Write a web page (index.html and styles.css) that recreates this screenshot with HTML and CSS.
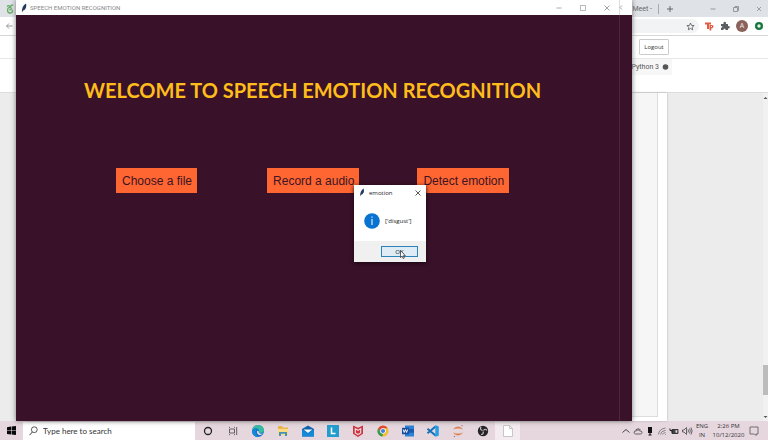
FILE: index.html
```
<!DOCTYPE html>
<html lang="en">
<head>
<meta charset="utf-8">
<title>Speech Emotion Recognition</title>
<link rel="stylesheet" href="styles.css">
</head>
<body>
<main class="desktop">
  <section class="browser">
    <div class="tabs">
      <svg class="tab-icon" width="8" height="10" viewBox="0 0 8 10"><path d="M1 2.500Q3 .5 4 3Q5 1 7 1M6 4.500Q2 2 1.500 6Q1.500 9 4 9Q6.500 9 6.500 7Q6 5 3 6" fill="none" stroke="#62ad62" stroke-width="1.300"/></svg>
      <span class="grow"></span>
      <span class="tab-title">Meet -</span>
      <button class="new-tab" aria-label="New tab"><svg width="8" height="8" viewBox="0 0 8 8"><path d="M4 1v6M1 4h6" stroke="#666"/></svg></button>
      <div class="chrome-controls">
        <button aria-label="Minimize"><svg width="8" height="8" viewBox="0 0 8 8"><path d="M1.500 4h5" stroke="#999"/></svg></button>
        <button aria-label="Restore"><svg width="8" height="8" viewBox="0 0 8 8"><path d="M1.500 2.500h4v4h-4zM3 2.500v-1h3.500v4h-1" fill="none" stroke="#888" stroke-width=".8"/></svg></button>
        <button aria-label="Close"><svg width="8" height="8" viewBox="0 0 8 8"><path d="M2 2l4 4M6 2l-4 4" stroke="#999" stroke-width=".9"/></svg></button>
      </div>
    </div>
    <div class="toolbar">
      <button aria-label="Back"><svg width="8" height="8" viewBox="0 0 8 8"><path d="M7.500 4H1.500M4 1.500L1.500 4L4 6.500" fill="none" stroke="#999"/></svg></button>
      <div class="address"><svg width="9" height="9" viewBox="0 0 9 9"><path d="M4.500 1l1 2.400 2.600.2-2 1.700.6 2.500-2.200-1.300-2.200 1.300.6-2.500-2-1.700 2.600-.2z" fill="none" stroke="#555" stroke-width=".8"/></svg></div>
      <div class="extensions">
        <svg width="10" height="10" viewBox="0 0 10 10"><path d="M1 1.500h6v2H5V8H3V3.500H1zM5.500 9.500V4h2.500q1.700.2 1.500 1.700Q9 7.300 7.300 7.300V9.500z" fill="#e35a43"/><path d="M7 5.500h1" stroke="#fff"/></svg>
        <svg width="10" height="10" viewBox="0 0 10 10"><path d="M1 3h2.500Q3 .8 4.700.8T6 3h2v2q1.800-.2 1.800 1.200T8 7.400V9H5.700Q5.500 7.500 4.500 7.500T3.300 9H1V6.800q1.400 0 1.400-1T1 4.900z" fill="#5b5f64"/></svg>
        <span class="avatar">A</span>
        <svg width="10" height="10" viewBox="0 0 10 10"><circle cx="5" cy="5" r="4" fill="#17763d"/><circle cx="5" cy="5" r="1.700" fill="#e9f3ed"/></svg>
      </div>
    </div>
    <div class="page-header"><button class="logout">Logout</button></div>
    <div class="kernel"><span>Python 3</span><svg width="13" height="16" viewBox="0 0 13 16"><circle cx="6.500" cy="8" r="2.800" fill="#555"/></svg></div>
    <div class="notebook">
      <div class="sheet"><div class="cells"></div></div>
      <div class="scroll"><svg width="5" height="4" viewBox="0 0 5 4"><path d="M.5 3l2-2 2 2z" fill="#555"/></svg><i></i><svg width="5" height="4" viewBox="0 0 5 4"><path d="M.5 1l2 2 2-2z" fill="#555"/></svg></div>
    </div>
  </section>

  <section class="app">
    <header class="titlebar">
      <svg width="6" height="10" viewBox="0 0 6 10"><path d="M5 .5Q6 4 3.500 7L2 7.500 1 9.500Q.5 3 5 .5z" fill="#24395e"/></svg>
      <span class="grow">SPEECH EMOTION RECOGNITION</span>
      <div class="controls">
        <button aria-label="Minimize"><svg width="8" height="8" viewBox="0 0 8 8"><path d="M1.500 4h5" stroke="#aaa"/></svg></button>
        <button aria-label="Maximize"><svg width="8" height="8" viewBox="0 0 8 8"><path d="M1.500 1.500h5v5h-5z" fill="none" stroke="#999" stroke-width=".7"/></svg></button>
        <button aria-label="Close"><svg width="8" height="8" viewBox="0 0 8 8"><path d="M1.500 1.500l5 5M6.500 1.500l-5 5" stroke="#999" stroke-width=".9"/></svg></button>
      </div>
      <svg width="13" height="15" viewBox="0 0 13 15"><path d="M.5 0v15" stroke="#ddd"/><path d="M3 5.500L1 7.500l2 2" fill="none" stroke="#999" stroke-width=".9"/></svg>
    </header>
    <div class="app-body">
      <div class="content">
        <h1>WELCOME TO SPEECH EMOTION RECOGNITION</h1>
        <div class="actions">
          <button>Choose a file</button>
          <button>Record a audio</button>
          <button>Detect emotion</button>
        </div>
      </div>
      <div class="edge"></div>
    </div>
  </section>

  <section class="dialog" role="dialog" aria-labelledby="dialog-title">
    <header>
      <svg width="6" height="9" viewBox="0 0 6 10"><path d="M5 .5Q6 4 3.500 7L2 7.500 1 9.500Q.5 3 5 .5z" fill="#24395e"/></svg>
      <span id="dialog-title" class="grow">emotion</span>
      <button aria-label="Close"><svg width="8" height="8" viewBox="0 0 8 8"><path d="M1.500 1.500l5 5M6.500 1.500l-5 5" stroke="#333" stroke-width=".8"/></svg></button>
    </header>
    <div class="message">
      <svg width="16" height="16" viewBox="0 0 16 16"><circle cx="8" cy="8" r="7.800" fill="#0873d1"/><path d="M8 3.500v1.300M8 6v6" stroke="#c5e2fa" stroke-width="1.300"/></svg>
      <span>['disgust']</span>
    </div>
    <footer><button class="ok">OK</button></footer>
    <svg class="cursor" width="6" height="9" viewBox="0 0 6 9"><path d="M.5.500v7l1.600-1.400 1 2.400 1.200-.5-1-2.300h2z" fill="#fff" stroke="#222" stroke-width=".7"/></svg>
  </section>
</main>

<footer class="taskbar">
  <button class="start" aria-label="Start"><svg width="9" height="9" viewBox="0 0 9 9"><path d="M0 1.200L4 .6v3.600H0zM4.600.500L9 0v4.200H4.600zM0 4.800h4v3.600L0 7.900zM4.600 4.800H9V9l-4.400-.6z" fill="#080808"/></svg></button>
  <label class="search">
    <svg width="9" height="10" viewBox="0 0 9 10"><circle cx="5.300" cy="3.700" r="2.900" fill="none" stroke="#444" stroke-width=".9"/><path d="M3.300 6L.6 9.200" stroke="#444"/></svg>
    <input type="text" placeholder="Type here to search" aria-label="Search">
  </label>
  <nav class="apps">
    <button aria-label="Cortana"><svg width="14" height="14" viewBox="0 0 14 14"><circle cx="7" cy="7" r="3.500" fill="none" stroke="#222" stroke-width="1.300"/></svg></button>
    <button aria-label="Task view"><svg width="14" height="14" viewBox="0 0 14 14"><path d="M3.500 5h5v4h-5zM3.500 2.800v1M8.500 2.800v1M3.500 10.200v1M8.500 10.200v1M10.700 3v8" fill="none" stroke="#555" stroke-width=".9"/></svg></button>
    <button aria-label="Edge"><svg width="14" height="14" viewBox="0 0 14 14"><circle cx="7" cy="7" r="6" fill="#1473c8"/><path d="M1 7Q1.500 1 7 1q6 .3 6 5.500Q12.500 9 9 9q-1.500 0-1.300-1.200Q9 5 5.500 4.300 2 4 1 7z" fill="#37bca0"/><path d="M1 7q1.500-3.500 5-2.200Q3.500 7.300 5.500 10.500L7 13Q1 12.500 1 7z" fill="#1687db"/><path d="M7.600 7.300Q7 9 9.500 9.800q1.800.2 2.800-.6-2 2.500-4.700 1.500Q5 9 6.500 6.500z" fill="#e6d9e6"/></svg></button>
    <button aria-label="Files"><svg width="14" height="14" viewBox="0 0 14 14"><path d="M2 2h4l1 1.500h5V11H2z" fill="#e8b64b"/><path d="M2 5h10v6H2z" fill="#f9dc83"/><path d="M3 12V8h8v4H9V9.700H5V12z" fill="#4592bb"/></svg></button>
    <button aria-label="Mail"><svg width="14" height="14" viewBox="0 0 14 14"><path d="M1 5l6-3.500L13 5v7.500H1z" fill="#0e65ae"/><path d="M2.500 5.500h9L7 9z" fill="#eef7fb"/><path d="M1 5.500L7 9.500l6-4v7H1z" fill="#1688d8"/></svg></button>
    <button aria-label="Lenovo"><svg width="14" height="14" viewBox="0 0 14 14"><path d="M1 1h12v12H1z" fill="#229dce"/><path d="M5.500 3.500v6h4" fill="none" stroke="#fff" stroke-width="1.500"/></svg></button>
    <button aria-label="McAfee"><svg width="14" height="14" viewBox="0 0 14 14"><path d="M2 1.500l5 2.300 5-2.300v8.300L7 13l-5-3.200z" fill="#cc3540"/><path d="M4.300 9V4.800L7 6.200l2.700-1.400V9L7 10.500z" fill="none" stroke="#eed6dc" stroke-width="1.200"/></svg></button>
    <button aria-label="Chrome"><svg width="14" height="14" viewBox="0 0 14 14"><circle cx="7" cy="7" r="5.500" fill="#f3bd2b"/><path d="M2.200 4.200A5.500 5.500 0 0 1 11.800 4.200H7L4.600 8.400z" fill="#dc4a3d"/><path d="M2.200 4.200L4.600 8.400 7 9.800l-.6 2.700A5.500 5.500 0 0 1 2.200 4.200z" fill="#319c56"/><circle cx="7" cy="7" r="2.800" fill="#fff"/><circle cx="7" cy="7" r="2.100" fill="#4182de"/></svg></button>
    <button aria-label="Word"><svg width="14" height="14" viewBox="0 0 14 14"><path d="M4 1.500h9v11H4z" fill="#2c82d4"/><path d="M4 5h9v3.700H4z" fill="#1c5aaf"/><path d="M1 3.800h7v6.500H1z" fill="#164d9e"/><path d="M2.200 5.500l1 3 1.200-3 1.200 3 1-3" fill="none" stroke="#fff" stroke-width=".9"/></svg></button>
    <button aria-label="Visual Studio Code"><svg width="14" height="14" viewBox="0 0 14 14"><path d="M1.500 4.800L9.500 11.500M1.500 9.200L9.500 2.500" stroke="#1272b8" stroke-width="2"/><path d="M9.300 1l3.500 1.500v9L9.300 13z" fill="#279ce4"/></svg></button>
    <button aria-label="Jupyter"><svg width="14" height="14" viewBox="0 0 14 14"><path d="M2.500 5Q7 .5 11.500 5 7 3.300 2.500 5zM2.500 9Q7 13.500 11.500 9 7 10.700 2.500 9z" fill="#dc8052" stroke="#dc8052" stroke-width=".4"/><circle cx="11" cy="1.800" r=".7" fill="#a77"/><circle cx="3.500" cy="12.500" r=".7" fill="#a77"/></svg></button>
    <button aria-label="OBS"><svg width="14" height="14" viewBox="0 0 14 14"><circle cx="7" cy="7" r="5.200" fill="#252427"/><path d="M6.500 6.500Q3.500 5.500 5 3M7.500 6.500Q9.500 4 11 6.500M7 7.500Q8 10.500 5 10.500" fill="none" stroke="#cfc5cb" stroke-width="1.200"/></svg></button>
    <button class="active" aria-label="Document"><svg width="14" height="14" viewBox="0 0 14 14"><path d="M2.500 1.500h6L11.500 4.500v8h-9z" fill="#fff" stroke="#bbb" stroke-width=".8"/><path d="M8.500 1.500v3h3" fill="none" stroke="#bbb" stroke-width=".8"/></svg></button>
  </nav>
  <span class="grow"></span>
  <div class="tray">
    <svg width="10" height="10" viewBox="0 0 10 10"><path d="M1.500 6.500L5 3.500l3.500 3" fill="none" stroke="#444"/></svg>
    <svg width="10" height="10" viewBox="0 0 10 10"><path d="M2.500 8Q.8 7.500 1 6q.5-1.300 2-1Q5 2.500 7 5q2-.2 2 1.500Q9 8 7.500 8zM2.500 4Q5 1.500 7.500 3.700" fill="none" stroke="#555" stroke-width=".9"/></svg>
    <svg width="10" height="10" viewBox="0 0 10 10"><path d="M3 1h4v6H3z" fill="#111"/><path d="M5 7v2M3.500 9h3" fill="none" stroke="#111"/></svg>
    <svg width="10" height="10" viewBox="0 0 10 10"><path d="M1.500 8.500Q2 3 8.500 2M3.500 8.500Q4 5 8.500 4.300M5.500 8.500Q6 7 8.500 6.500M8 8.500h.8" fill="none" stroke="#777" stroke-width=".9"/></svg>
    <svg width="10" height="10" viewBox="0 0 10 10"><path d="M3 3.500h6v4H3z" fill="#444" stroke="#222" stroke-width=".8"/><path d="M1 2.500v2h2v2" fill="none" stroke="#222"/><path d="M6.500 4.200h1.800v2.500H6.500z" fill="#ddd"/></svg>
    <svg width="12" height="10" viewBox="0 0 12 10"><path d="M1.500 4H3l2.500-2.500v7L3 6H1.500zM7 3.500q1 1.500 0 3M8.500 2.500q1.700 2.500 0 5M10 1.500q2.200 3.500 0 7" fill="none" stroke="#444" stroke-width=".8"/></svg>
  </div>
  <div class="stack lang"><span>ENG</span><span>IN</span></div>
  <div class="stack clock"><span>2:26 PM</span><span>10/12/2020</span></div>
  <button class="notices" aria-label="Notifications"><svg width="10" height="10" viewBox="0 0 10 10"><path d="M1 1h8v7H7v1.500L5.500 8H1z" fill="none" stroke="#555" stroke-width=".8"/></svg></button>
</footer>
</body>
</html>
```
FILE: styles.css
```
* { box-sizing: border-box; }
body {
  margin: 0;
  height: 100vh;
  display: flex;
  flex-direction: column;
  overflow: hidden;
  font-family: "Open Sans", sans-serif;
  font-size: 7px;
  color: #333;
}
button {
  border: 0;
  padding: 0;
  background: none;
  font: inherit;
  color: inherit;
  display: flex;
  align-items: center;
  justify-content: center;
}
svg { display: block; flex: none; }
.grow { flex: 1; }
.desktop { flex: 1; position: relative; min-height: 0; }

.browser { height: 100%; display: flex; flex-direction: column; background: #fff; }
.tabs { height: 17px; display: flex; align-items: center; background: #dfe2e7; padding: 0 5px 0 6px; flex: none; }
.tab-title { padding-right: 6px; border-right: 1px solid #aaa; color: #666; font-family: Roboto, sans-serif; line-height: 10px; }
.new-tab { width: 22px; }
.chrome-controls { display: flex; gap: 15px; margin-left: 28px; }
.toolbar { height: 19px; display: flex; align-items: center; padding: 0 4px 0 5px; border-bottom: 1px solid #d7d7d7; flex: none; }
.address { flex: 1; height: 14px; margin-left: 8px; border-radius: 7px; background: #f1f3f4; display: flex; align-items: center; justify-content: flex-end; padding-right: 4px; }
.extensions { display: flex; align-items: center; gap: 6px; padding-left: 5px; }
.avatar { width: 12px; height: 12px; border-radius: 50%; background: #8a6259; color: #eee; text-align: center; line-height: 12px; }
.page-header { height: 23px; display: flex; align-items: center; justify-content: flex-end; padding-right: 99px; border-bottom: 1px solid #e7e7e7; flex: none; }
.logout { width: 30px; height: 16px; border: 1px solid #ccc; border-radius: 1px; font-size: 6px; }
.kernel { height: 34px; flex: none; display: flex; justify-content: flex-end; align-items: flex-start; padding-right: 96px; color: #555; font-family: Roboto, sans-serif; border-bottom: 1px solid #ddd; line-height: 16px; }
.kernel > * { background: #f7f7f7; }
.notebook { flex: 1; background: #ececec; display: flex; justify-content: flex-end; min-height: 0; }
.sheet { width: 640px; background: #fff; box-shadow: 0 0 2px #aaa; padding: 0 9px 4px 0; margin-right: 96px; }
.cells { height: 100%; background: #f6f6f6; border: 1px solid #ddd; border-top: 0; }
.scroll { width: 5px; display: flex; flex-direction: column; align-items: center; padding: 3px 0 2px; background: #f1f1f1; }
.scroll i { width: 5px; height: 30px; margin: auto 0 20px; background: #bcbcbc; }

.app { position: absolute; top: 0; bottom: 0; left: 16px; right: 136px; display: flex; flex-direction: column; box-shadow: 0 0 5px #777; }
.titlebar { height: 15px; flex: none; background: #fff; display: flex; align-items: center; padding-left: 5px; gap: 3px; font-family: Roboto, sans-serif; font-size: 6px; color: #888; }
.titlebar .controls { display: flex; gap: 16px; padding-right: 5px; }
.app-body { flex: 1; display: flex; background: #391128; }
.content { flex: 1; }
.edge { width: 13px; border-left: 1px solid #50253e; }
h1 { margin: 60px 0 0 68px; font: 700 20px/30px Lato, sans-serif; color: #ffbd1c; white-space: nowrap; }
.actions { display: flex; gap: 58px; margin: 63px 0 0 100px; }
.actions button { flex: none; height: 25px; padding: 0 5px 0 6px; background: #ff6631; color: #3b1425; font: 12px "Liberation Sans", sans-serif; }
.actions button:first-child { margin-right: 12px; }

.dialog { position: absolute; left: 354px; top: 185px; width: 72px; background: #fff; box-shadow: 0 1px 4px #160711; font-size: 6px; color: #222; }
.dialog header { height: 15px; display: flex; align-items: center; gap: 4px; padding: 0 4px 0 5px; }
.message { height: 41px; display: flex; align-items: center; gap: 5px; padding: 0 10px; }
.dialog footer { height: 21px; background: #f0f0f0; display: flex; align-items: center; justify-content: flex-end; padding-right: 8px; }
.ok { width: 37px; height: 11px; border: 1px solid #2a83bb; background: #dfecf5; }
.cursor { position: absolute; left: 46px; top: 65px; }

.taskbar { height: 19px; flex: none; display: flex; align-items: center; background: #e6d7df; color: #333; }
.start { width: 23px; height: 19px; }
.search { width: 172px; height: 18px; align-self: flex-end; display: flex; align-items: center; gap: 5px; padding-left: 6px; background: #fff; }
.search input { flex: 1; min-width: 0; border: 0; padding: 0; outline: 0; background: none; font: 8px/18px Lato, sans-serif; color: #333; }
.search input::placeholder { color: #333; opacity: 1; }
.apps { display: flex; }
.apps button { width: 25px; height: 19px; }
.apps .active { background: #f3ebef; }
.tray { display: flex; align-items: center; gap: 2px; }
.stack { display: flex; flex-direction: column; text-align: center; font-size: 6px; line-height: 9px; }
.lang { width: 18px; }
.clock { width: 35px; }
.notices { width: 22px; height: 19px; padding-right: 6px; }
```
